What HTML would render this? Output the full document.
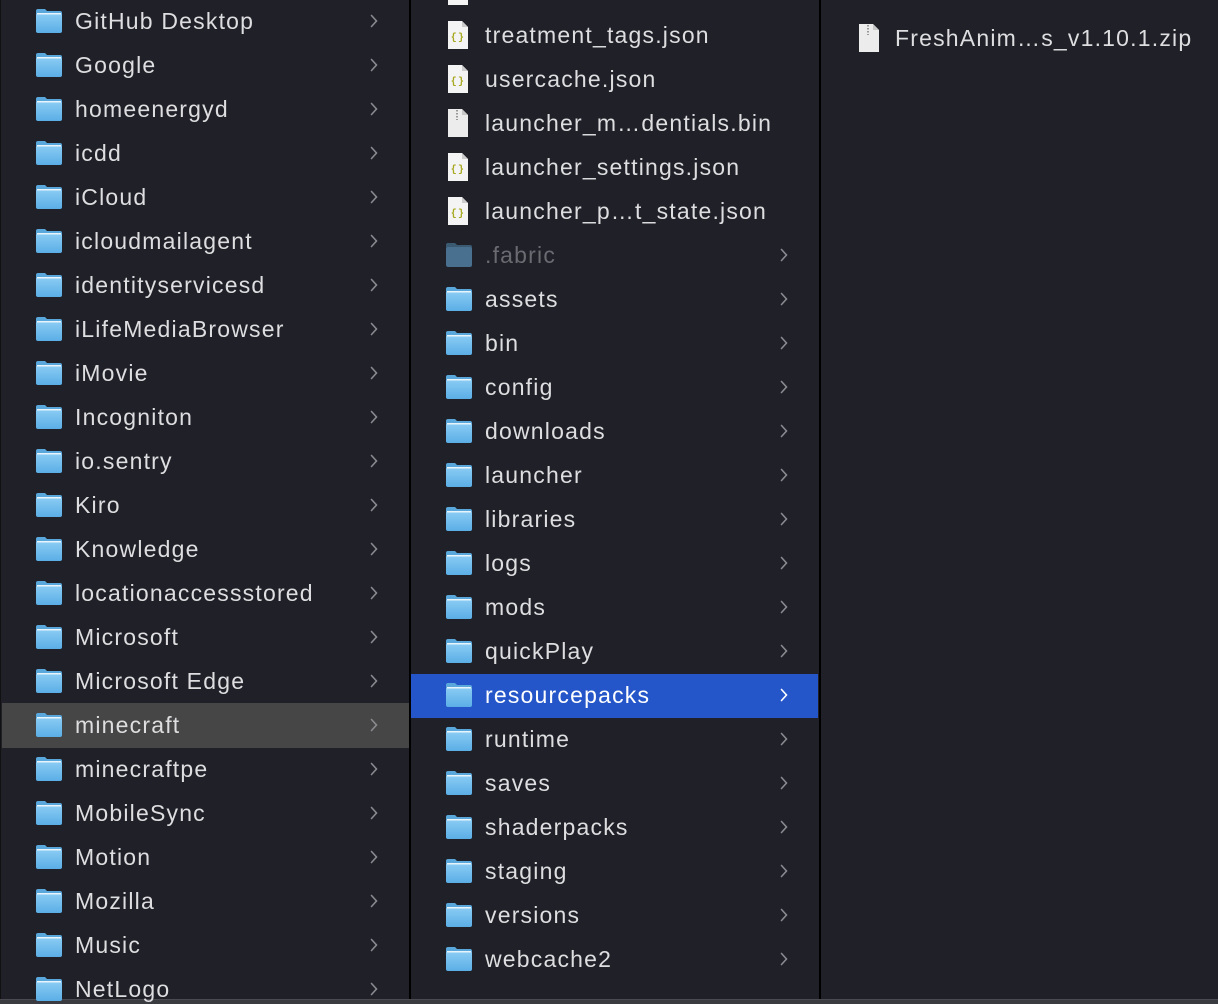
<!DOCTYPE html><html><head><style>
html,body{margin:0;width:1218px;height:1004px;overflow:hidden}
body{background:#1f2028;position:relative;font-family:"Liberation Sans",sans-serif;}
.r{position:absolute;height:44px;display:flex;align-items:center;color:#dedee0;font-size:23px;letter-spacing:1.2px}
.r span{position:absolute;top:50%;transform:translateY(-48%);white-space:nowrap}
.f{position:absolute;top:9px;width:28px;height:26px}
.c{position:absolute;top:15px;width:8px;height:14px}
.line{position:absolute;top:0;width:2px;height:999px;background:#000}
</style></head><body>
<div style="position:absolute;left:2px;top:703px;width:407px;height:45px;background:#464646"></div>
<div style="position:absolute;left:411px;top:674px;width:407px;height:44px;background:#2456c9"></div>
<div class="line" style="left:0;width:1px;background:#111"></div>
<div class="line" style="left:409px"></div>
<div class="line" style="left:819px"></div>
<div style="position:absolute;left:0;top:999px;width:1218px;height:5px;background:#3a3a41;border-top:1px solid #4a4a50"></div>
<svg width="0" height="0" style="position:absolute"><defs>
<linearGradient id="g" x1="0" y1="0" x2="0" y2="1"><stop offset="0" stop-color="#8ccdf5"/><stop offset="1" stop-color="#5aaee6"/></linearGradient>
<symbol id="fold" viewBox="0 0 28 26"><path d="M1 3q0-2 2-2h7l2 2h13q2 0 2 2v18q0 2-2 2H3q-2 0-2-2z" fill="#5aa7dc"/><rect x="1" y="5" width="26" height="20" rx="2.5" fill="url(#g)"/><rect x="2" y="5" width="24" height="1.5" fill="#e8f4fc"/></symbol>
<symbol id="dfold" viewBox="0 0 28 26"><path d="M1 3q0-2 2-2h7l2 2h13q2 0 2 2v18q0 2-2 2H3q-2 0-2-2z" fill="#3a5a72"/><rect x="1" y="5" width="26" height="20" rx="2.5" fill="#4a7090"/></symbol>
<symbol id="chev" viewBox="0 0 8 14"><path d="M1.5 1.5L6.5 7L1.5 12.5" fill="none" stroke="#8a8a90" stroke-width="1.6" stroke-linecap="round"/></symbol>
<symbol id="chevw" viewBox="0 0 8 14"><path d="M1.5 1.5L6.5 7L1.5 12.5" fill="none" stroke="#fff" stroke-width="1.6" stroke-linecap="round"/></symbol>
<symbol id="json" viewBox="0 0 22 30"><path d="M1 1h14l6 6v22H1z" fill="#f4f4f4"/><path d="M15 1v6h6" fill="#ccc"/><text x="11" y="20" font-size="10" font-weight="bold" fill="#a8a820" text-anchor="middle" font-family="Liberation Mono">{}</text></symbol>
<symbol id="zip" viewBox="0 0 22 30"><path d="M1 1h14l6 6v22H1z" fill="#ececec"/><path d="M15 1v6h6" fill="#c8c8c8"/><path d="M10 2v10" stroke="#999" stroke-width="2" stroke-dasharray="1.5 1.5"/></symbol>
</defs></svg>
<div id="c1"></div>
<script>
var a=["GitHub Desktop","Google","homeenergyd","icdd","iCloud","icloudmailagent","identityservicesd","iLifeMediaBrowser","iMovie","Incogniton","io.sentry","Kiro","Knowledge","locationaccessstored","Microsoft","Microsoft Edge","minecraft","minecraftpe","MobileSync","Motion","Mozilla","Music","NetLogo"];
var h="";
a.forEach(function(n,i){var y=21+i*44-22;
h+='<div class="r" style="left:0;top:'+y+'px;width:409px"><svg class="f" style="left:35px"><use href="#fold"/></svg><span style="left:75px">'+n+'</span><svg class="c" style="left:370px"><use href="#chev"/></svg></div>';});
var b=[["","json"],["treatment_tags.json","json"],["usercache.json","json"],["launcher_m…dentials.bin","zip"],["launcher_settings.json","json"],["launcher_p…t_state.json","json"],[".fabric","d"],["assets"],["bin"],["config"],["downloads"],["launcher"],["libraries"],["logs"],["mods"],["quickPlay"],["resourcepacks"],["runtime"],["saves"],["shaderpacks"],["staging"],["versions"],["webcache2"]];
b.forEach(function(e,i){var y=-9+i*44-22;var ic,col=e[1]=="d"?"#6a6a70":"#dedee0";
if(e[1]=="json"||e[1]=="zip")ic='<svg style="position:absolute;left:447px;top:7px;width:22px;height:30px"><use href="#'+e[1]+'"/></svg>';
else ic='<svg class="f" style="left:445px"><use href="#'+(e[1]=="d"?"dfold":"fold")+'"/></svg>';
var ch=(e[1]&&e[1]!="d")?'':'<svg class="c" style="left:780px"><use href="#chev"/></svg>';
if(i==16){col="#fff";ch=ch.replace('#chev','#chevw');}
h+='<div class="r" style="left:0;top:'+y+'px;width:819px">'+ic+'<span style="left:485px;color:'+col+'">'+e[0]+'</span>'+ch+'</div>';});
h+='<div class="r" style="left:0;top:16px;width:1218px"><svg style="position:absolute;left:858px;top:7px;width:22px;height:30px"><use href="#zip"/></svg><span style="left:895px">FreshAnim…s_v1.10.1.zip</span></div>';
document.getElementById("c1").innerHTML=h;
</script>
</body></html>
